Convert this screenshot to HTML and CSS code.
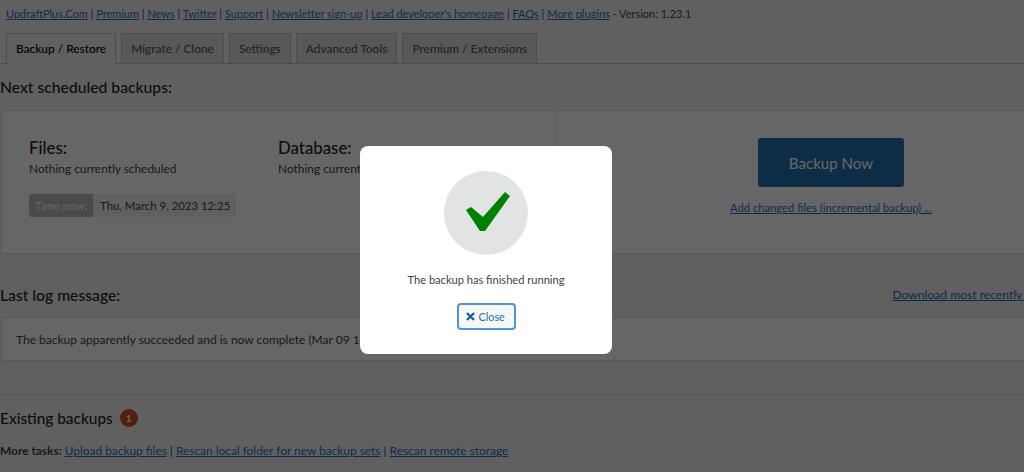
FILE: index.html
```html
<!DOCTYPE html>
<html lang="en">
<head>
<meta charset="utf-8">
<title>UpdraftPlus Backup / Restore</title>
<link rel="stylesheet" href="styles.css">
</head>
<body>
<main class="page">
  <p class="toplinks"><a href="#">UpdraftPlus.Com</a> | <a href="#">Premium</a> | <a href="#">News</a> | <a href="#">Twitter</a> | <a href="#">Support</a> | <a href="#">Newsletter sign-up</a> | <a href="#">Lead developer's homepage</a> | <a href="#">FAQs</a> | <a href="#">More plugins</a> - Version: 1.23.1</p>
  <nav class="tabs">
    <a class="tab active" href="#">Backup / Restore</a>
    <a class="tab" href="#">Migrate / Clone</a>
    <a class="tab" href="#">Settings</a>
    <a class="tab" href="#">Advanced Tools</a>
    <a class="tab" href="#">Premium / Extensions</a>
  </nav>
  <h2 class="heading next">Next scheduled backups:</h2>
  <section class="schedule">
    <div class="schedule-left">
      <div class="columns">
        <div class="col">
          <h3>Files:</h3>
          <p>Nothing currently scheduled</p>
        </div>
        <div class="col">
          <h3>Database:</h3>
          <p>Nothing currently scheduled</p>
        </div>
      </div>
      <div class="time"><span class="time-label">Time now:</span><span class="time-value">Thu, March 9, 2023 12:25</span></div>
    </div>
    <div class="schedule-right">
      <button class="backup-now" type="button">Backup Now</button>
      <a class="incremental" href="#">Add changed files (incremental backup) ...</a>
    </div>
  </section>
  <div class="log-head">
    <h2 class="heading">Last log message:</h2>
    <a href="#" class="log-link">Download most recently modified log file</a>
  </div>
  <section class="log">The backup apparently succeeded and is now complete (Mar 09 12:25:31)</section>
  <hr class="rule">
  <h2 class="heading existing">Existing backups <span class="badge">1</span></h2>
  <p class="tasks"><b>More tasks:</b> <a href="#">Upload backup files</a> | <a href="#">Rescan local folder for new backup sets</a> | <a href="#">Rescan remote storage</a></p>
</main>
<div class="overlay">
  <div class="modal">
    <div class="circle">
      <svg class="check" viewBox="0 0 84 84" width="84" height="84" aria-hidden="true"><path d="M22 39 27 36 39 46 61 21 66 25 41 60 36 60Z"/></svg>
    </div>
    <p class="modal-text">The backup has finished running</p>
    <button class="close" type="button"><svg viewBox="0 0 10 10" width="9" height="9" aria-hidden="true"><path d="M1 1 9 9M9 1 1 9"/></svg>Close</button>
  </div>
</div>
</body>
</html>
```
FILE: styles.css
```css
* { box-sizing: border-box; }
html, body { margin: 0; height: 100%; overflow: hidden; }
body {
  background: #f0f0f1;
  color: #3c434a;
  font: 11.900px/18px Lato, "Noto Sans", sans-serif;
}
a { color: #2271b1; }
p { margin: 0; }
.page { width: 1110px; }
.toplinks { padding: 5px 0 0 6px; height: 33px; font-size: 10.980px; }
.tabs {
  display: flex;
  gap: 5px;
  height: 31px;
  padding-left: 6px;
  border-bottom: 1px solid #c3c4c7;
}
.tab {
  height: 30px;
  padding: 0 9px;
  line-height: 30px;
  background: #dcdcde;
  border: 1px solid #c3c4c7;
  border-bottom: 0;
  color: #50575e;
  font-size: 11.900px;
  font-weight: 500;
  text-decoration: none;
}
.tab.active {
  height: 31px;
  background: #f0f0f1;
  color: #000;
}
.heading {
  margin: 0;
  font-size: 15.700px;
  line-height: 22px;
  font-weight: 500;
  color: #1d2327;
}
.next { padding: 12px 0 0; height: 46px; }
.schedule {
  display: flex;
  height: 144px;
  margin: 0 3px 0 1px;
  background: #fff;
  border: 1px solid #dcdcde;
}
.schedule-left {
  width: 554px;
  padding: 25px 0 0 27px;
  border-right: 1px solid #f0f0f1;
}
.columns { display: flex; }
.col { width: 249px; }
.col h3 {
  margin: 0;
  font-size: 16.800px;
  line-height: 23px;
  font-weight: 500;
  color: #1d2327;
}
.col p { margin-top: 1px; white-space: nowrap; }
.time { display: flex; margin-top: 16px; height: 23px; line-height: 23px; font-size: 11.400px; }
.time-label {
  padding: 0 6px;
  width: 64px;
  background: #b9b9b9;
  color: #fff;
  border-radius: 3px 0 0 3px;
  white-space: nowrap;
}
.time-value {
  padding: 0 6px 0 7px;
  background: #f0f0f1;
  border-radius: 0 3px 3px 0;
}
.schedule-right {
  flex: 1;
  display: flex;
  flex-direction: column;
  align-items: center;
  padding-top: 27px;
}
.backup-now {
  width: 146px;
  height: 49px;
  background: #2271b1;
  border: 0;
  border-radius: 3px;
  color: #fff;
  font: 15.100px Lato, "Noto Sans", sans-serif;
}
.incremental { margin-top: 12px; font-size: 11.200px; }
.log-head {
  display: flex;
  justify-content: space-between;
  align-items: center;
  height: 63px;
  padding: 19px 0 0;
}
.log-link { font-size: 12.100px; white-space: nowrap; }
.log {
  height: 44px;
  margin: 0 3px 0 1px;
  padding-left: 14px;
  background: #fff;
  border: 1px solid #dcdcde;
  font-size: 12px;
  line-height: 43px;
  white-space: nowrap;
}
.rule { margin: 33px 0 0; border: 0; border-top: 1px solid #dcdcde; }
.existing {
  display: flex;
  align-items: center;
  gap: 7px;
  height: 22px;
  margin-top: 12px;
  font-size: 15.400px;
}
.badge {
  display: flex;
  align-items: center;
  justify-content: center;
  width: 18px;
  height: 18px;
  border-radius: 50%;
  background: #d54e21;
  color: #fff;
  font-size: 10px;
  font-weight: 700;
}
.tasks { margin-top: 13px; }
.tasks b { font-weight: 700; }
.overlay {
  position: fixed;
  inset: 0;
  background: rgba(0, 0, 0, .6);
}
.modal {
  position: absolute;
  left: 360px;
  top: 146px;
  width: 252px;
  height: 208px;
  display: flex;
  flex-direction: column;
  align-items: center;
  padding-top: 25px;
  background: #fff;
  border-radius: 8px;
}
.circle {
  width: 84px;
  height: 84px;
  border-radius: 50%;
  background: #e2e4e3;
}
.check { display: block; fill: #008000; }
.modal-text { margin-top: 16px; font-size: 11.100px; color: #3c434a; }
.close {
  display: flex;
  align-items: center;
  gap: 4px;
  margin-top: 14px;
  width: 59px;
  height: 27px;
  padding: 0 0 0 7px;
  background: #f6f7f7;
  border: 2px solid #4f94d4;
  border-radius: 4px;
  color: #2271b1;
  font: 10.800px Lato, "Noto Sans", sans-serif;
}
.close svg { fill: none; stroke: #135e96; stroke-width: 2.400; }
```
